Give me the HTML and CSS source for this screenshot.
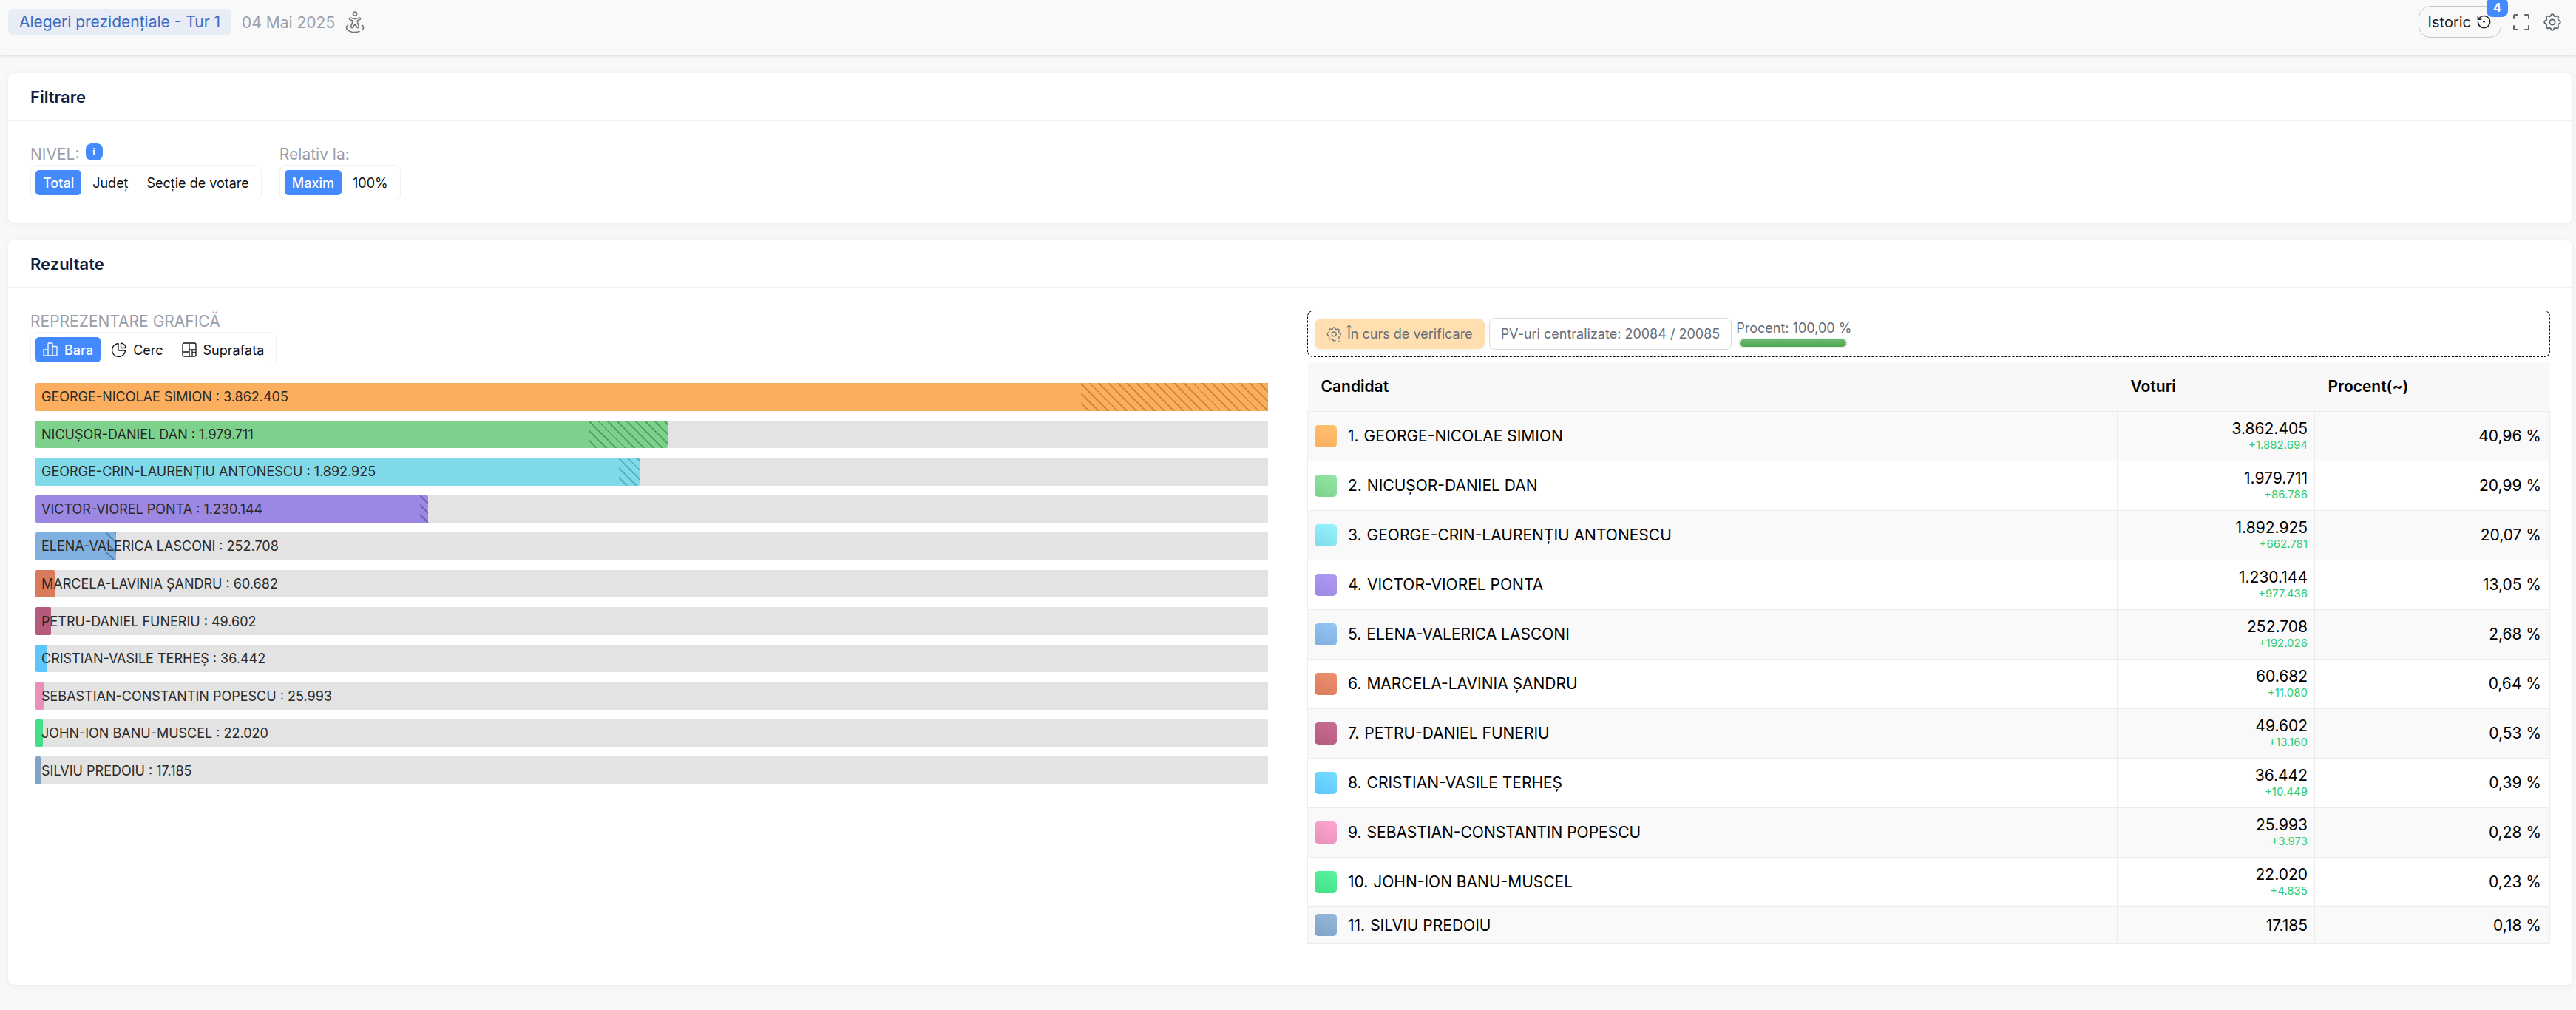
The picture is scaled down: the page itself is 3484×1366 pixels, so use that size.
FILE: index.html
```html
<!DOCTYPE html>
<html lang="ro">
<head>
  <meta charset="UTF-8">
  <title>Alegeri prezidențiale - Tur 1</title>
  <meta name="viewport" content="width=device-width, initial-scale=1.0">
  <link rel="stylesheet" href="styles.css">
</head>
<body>
  <header class="topbar">
    <div class="topbar-info">
      <a class="tag" href="#">Alegeri prezidențiale - Tur 1</a>
      <span class="date">04 Mai 2025</span>
      <svg class="person" viewBox="0 0 26 30" fill="none" stroke="currentColor" stroke-width="1.6" stroke-linejoin="round" stroke-linecap="round">
        <circle cx="13" cy="3.6" r="2.600"/>
        <path d="M5.800 9.500c-1 1.300.2 2.200 1.500 2.500l2.200.8v2.700l-1.800 5c-.6 2.200 1.800 2.800 2.600 1.200L13 17.500l2.700 4.200c.8 1.600 3.200 1 2.600-1.200l-1.800-5v-2.700l2.200-.8c1.300-.3 2.500-1.200 1.500-2.500-.7-1-2-.5-3 0-2.600 1.200-5.800 1.200-8.400 0-1-.5-2.300-1-3 0z"/>
        <path d="M3.500 19C-.5 22.500 2 27 9 28.200c3.500.5 7 .3 10-.7M22.500 19c2.500 1.500 3 4 .5 6.500"/>
      </svg>
    </div>
    <div class="topbar-actions">
      <button class="history" type="button">
        Istoric
        <svg viewBox="0 0 20 20" fill="none" stroke="currentColor" stroke-width="1.7" stroke-linecap="round" stroke-linejoin="round">
          <path d="M1.500 10.500a8.500 8.500 0 1 0 2.300-6.300L1.500 6.500M1.500 2v4.500H6"/>
          <circle cx="10" cy="10" r="1" fill="currentColor" stroke-width="1"/>
        </svg>
        <span class="count">4</span>
      </button>
      <button class="icon-btn" type="button" aria-label="Ecran complet">
        <svg viewBox="0 0 24 24" fill="none" stroke="currentColor" stroke-width="2" stroke-linecap="round" stroke-linejoin="round">
          <path d="M2 7V3.500A1.500 1.500 0 0 1 3.500 2H7M17 2h3.500A1.500 1.500 0 0 1 22 3.500V7M22 17v3.500a1.500 1.500 0 0 1-1.500 1.500H17M7 22H3.500A1.500 1.500 0 0 1 2 20.500V17"/>
        </svg>
      </button>
      <button class="icon-btn" type="button" aria-label="Setări">
        <svg viewBox="2 2 20 20" fill="none" stroke="currentColor" stroke-width="1.5" stroke-linecap="round" stroke-linejoin="round">
          <path d="M10.325 4.317c.426-1.756 2.924-1.756 3.350 0a1.724 1.724 0 0 0 2.573 1.066c1.543-.94 3.310.826 2.370 2.370a1.724 1.724 0 0 0 1.065 2.572c1.756.426 1.756 2.924 0 3.350a1.724 1.724 0 0 0-1.066 2.573c.94 1.543-.826 3.310-2.370 2.370a1.724 1.724 0 0 0-2.572 1.065c-.426 1.756-2.924 1.756-3.350 0a1.724 1.724 0 0 0-2.573-1.066c-1.543.94-3.310-.826-2.370-2.370a1.724 1.724 0 0 0-1.065-2.572c-1.756-.426-1.756-2.924 0-3.350a1.724 1.724 0 0 0 1.066-2.573c-.94-1.543.826-3.310 2.370-2.370 1 .608 2.296.07 2.572-1.065z"/>
          <circle cx="12" cy="12" r="3"/>
        </svg>
      </button>
    </div>
  </header>

  <main>
    <section class="card">
      <h2>Filtrare</h2>
      <div class="card-body filters">
        <div>
          <div class="label">NIVEL: <span class="info">i</span></div>
          <div class="group">
            <button class="active" type="button">Total</button>
            <button type="button">Județ</button>
            <button type="button">Secție de votare</button>
          </div>
        </div>
        <div>
          <div class="label">Relativ la:</div>
          <div class="group">
            <button class="active" type="button">Maxim</button>
            <button type="button">100%</button>
          </div>
        </div>
      </div>
    </section>

    <section class="card">
      <h2>Rezultate</h2>
      <div class="card-body results">
        <div class="chart">
          <div class="label">REPREZENTARE GRAFICĂ</div>
          <div class="group">
            <button class="active" type="button">
              <svg viewBox="0 0 20 20" fill="none" stroke="currentColor" stroke-width="1.300" stroke-linejoin="round"><path d="M1 10h6v8H2a1 1 0 0 1-1-1zM7 18V2a1 1 0 0 1 1-1h4a1 1 0 0 1 1 1v16zM13 5.500h5a1 1 0 0 1 1 1V17a1 1 0 0 1-1 1h-5z"/></svg>
              Bara
            </button>
            <button type="button">
              <svg viewBox="0 0 20 20" fill="none" stroke="currentColor" stroke-width="1.300" stroke-linejoin="round"><path d="M9 1.500V10a1 1 0 0 0 1 1h8.500A9 9 0 1 1 9 1.500zM12.500 1v6.500H19A7 7 0 0 0 12.500 1z"/></svg>
              Cerc
            </button>
            <button type="button">
              <svg viewBox="0 0 20 20" fill="none" stroke="currentColor" stroke-width="1.300"><rect x="1" y="1" width="18" height="18" rx="2"/><path d="M10 1v18M1 13h9M10 10h9M14 10v9M14 14h5M16.500 10v4"/></svg>
              Suprafata
            </button>
          </div>

          <div class="bars">
            <div class="bar"><i class="fill c1" style="width:100%"><b style="width:253px"></b></i><span>GEORGE-NICOLAE SIMION : 3.862.405</span></div>
            <div class="bar"><i class="fill c2" style="width:51.26%"><b style="width:107px"></b></i><span>NICUȘOR-DANIEL DAN : 1.979.711</span></div>
            <div class="bar"><i class="fill c3" style="width:49.01%"><b style="width:28px"></b></i><span>GEORGE-CRIN-LAURENȚIU ANTONESCU : 1.892.925</span></div>
            <div class="bar"><i class="fill c4" style="width:31.85%"><b style="width:11px"></b></i><span>VICTOR-VIOREL PONTA : 1.230.144</span></div>
            <div class="bar"><i class="fill c5" style="width:6.54%"><b style="width:13px"></b></i><span>ELENA-VALERICA LASCONI : 252.708</span></div>
            <div class="bar"><i class="fill c6" style="width:1.57%"></i><span>MARCELA-LAVINIA ȘANDRU : 60.682</span></div>
            <div class="bar"><i class="fill c7" style="width:1.28%"></i><span>PETRU-DANIEL FUNERIU : 49.602</span></div>
            <div class="bar"><i class="fill c8" style="width:0.94%"></i><span>CRISTIAN-VASILE TERHEȘ : 36.442</span></div>
            <div class="bar"><i class="fill c9" style="width:0.67%"></i><span>SEBASTIAN-CONSTANTIN POPESCU : 25.993</span></div>
            <div class="bar"><i class="fill c10" style="width:0.57%"></i><span>JOHN-ION BANU-MUSCEL : 22.020</span></div>
            <div class="bar"><i class="fill c11" style="width:0.44%"></i><span>SILVIU PREDOIU : 17.185</span></div>
          </div>
        </div>

        <div class="ranking">
          <div class="status">
            <span class="chip chip-warn">
              <svg viewBox="0 0 20 20" fill="none" stroke="currentColor" stroke-width="1.300" stroke-linecap="round" stroke-linejoin="round"><path d="M12 18.500c-1 1-3 .5-3.400-1a1.700 1.700 0 0 0-2.500-1c-1.600.9-3.400-.8-2.500-2.400a1.700 1.700 0 0 0-1-2.500c-1.800-.5-1.800-2.900 0-3.400a1.700 1.700 0 0 0 1-2.500c-.9-1.500.9-3.300 2.500-2.400a1.700 1.700 0 0 0 2.500-1c.4-1.800 2.900-1.800 3.300 0a1.700 1.700 0 0 0 2.500 1c1.600-.9 3.400.9 2.500 2.400a1.700 1.700 0 0 0 1 2.500c1.300.3 1.700 1.600 1.300 2.500"/><circle cx="10.200" cy="9.800" r="3"/><path d="M17 13v3.500M17 19.200v.1"/></svg>
              În curs de verificare
            </span>
            <span class="chip">PV-uri centralizate: 20084 / 20085</span>
            <div class="progress">
              <label for="procent">Procent: 100,00 %</label>
              <progress id="procent" value="100" max="100"></progress>
            </div>
          </div>

          <table>
            <thead>
              <tr><th>Candidat</th><th class="col-votes">Voturi</th><th class="col-percent">Procent(~)</th></tr>
            </thead>
            <tbody>
              <tr><td><div class="name"><i class="swatch c1"></i>1. <span>GEORGE-NICOLAE SIMION</span></div></td><td>3.862.405<small>+1.882.694</small></td><td>40,96 %</td></tr>
              <tr><td><div class="name"><i class="swatch c2"></i>2. <span>NICUȘOR-DANIEL DAN</span></div></td><td>1.979.711<small>+86.786</small></td><td>20,99 %</td></tr>
              <tr><td><div class="name"><i class="swatch c3"></i>3. <span>GEORGE-CRIN-LAURENȚIU ANTONESCU</span></div></td><td>1.892.925<small>+662.781</small></td><td>20,07 %</td></tr>
              <tr><td><div class="name"><i class="swatch c4"></i>4. <span>VICTOR-VIOREL PONTA</span></div></td><td>1.230.144<small>+977.436</small></td><td>13,05 %</td></tr>
              <tr><td><div class="name"><i class="swatch c5"></i>5. <span>ELENA-VALERICA LASCONI</span></div></td><td>252.708<small>+192.026</small></td><td>2,68 %</td></tr>
              <tr><td><div class="name"><i class="swatch c6"></i>6. <span>MARCELA-LAVINIA ȘANDRU</span></div></td><td>60.682<small>+11.080</small></td><td>0,64 %</td></tr>
              <tr><td><div class="name"><i class="swatch c7"></i>7. <span>PETRU-DANIEL FUNERIU</span></div></td><td>49.602<small>+13.160</small></td><td>0,53 %</td></tr>
              <tr><td><div class="name"><i class="swatch c8"></i>8. <span>CRISTIAN-VASILE TERHEȘ</span></div></td><td>36.442<small>+10.449</small></td><td>0,39 %</td></tr>
              <tr><td><div class="name"><i class="swatch c9"></i>9. <span>SEBASTIAN-CONSTANTIN POPESCU</span></div></td><td>25.993<small>+3.973</small></td><td>0,28 %</td></tr>
              <tr><td><div class="name"><i class="swatch c10"></i>10. <span>JOHN-ION BANU-MUSCEL</span></div></td><td>22.020<small>+4.835</small></td><td>0,23 %</td></tr>
              <tr><td><div class="name"><i class="swatch c11"></i>11. <span>SILVIU PREDOIU</span></div></td><td>17.185</td><td>0,18 %</td></tr>
            </tbody>
          </table>
        </div>
      </div>
    </section>
  </main>
</body>
</html>
```
FILE: styles.css
```css
* {
  box-sizing: border-box;
}
body {
  margin: 0;
  font-family: Inter, sans-serif;
  font-size: 21px;
  color: #000;
  background: #f8f8f8;
}
button {
  font-family: inherit;
  cursor: pointer;
}
.topbar {
  display: flex;
  justify-content: space-between;
  align-items: flex-start;
  height: 75px;
  padding: 8px 17px 0 11px;
  background: #f9f9f9;
  box-shadow: 0 1px 5px rgba(0,0,0,0.12);
}
.topbar-info {
  display: flex;
  align-items: center;
  gap: 14px;
  padding-top: 4px;
}
.tag {
  padding: 0 15px;
  line-height: 36px;
  border-radius: 8px;
  background: #e7ecf7;
  color: #3a6bbf;
  text-decoration: none;
}
.date {
  color: #9a9fac;
}
.person {
  width: 26px;
  height: 30px;
  color: #777;
}
.topbar-actions {
  display: flex;
  align-items: center;
  gap: 12px;
}
.history {
  position: relative;
  display: flex;
  align-items: center;
  gap: 8px;
  height: 43px;
  padding: 0 13px 0 12px;
  border: 1px solid #c8c8c8;
  border-radius: 16px;
  background: transparent;
  font-size: 20px;
  color: #222;
}
.history svg {
  width: 19px;
  height: 19px;
}
.count {
  position: absolute;
  top: -12px;
  right: -10px;
  width: 29px;
  line-height: 26px;
  border-radius: 8px;
  background: #448aff;
  color: #fff;
  font-size: 16px;
  font-weight: 700;
}
.icon-btn {
  display: flex;
  padding: 3px;
  border: 0;
  background: none;
  color: #5b6570;
}
.icon-btn svg {
  width: 24px;
  height: 24px;
}
main {
  display: flex;
  flex-direction: column;
  gap: 24px;
  padding: 24px 5px 35px 11px;
}
.card {
  background: #fff;
  border-radius: 8px;
  box-shadow: 0 1px 8px rgba(0,0,0,0.06);
}
h2 {
  margin: 0;
  padding: 1px 30px 0;
  line-height: 62px;
  border-bottom: 1px solid #f0f0f0;
  font-size: 22px;
  font-weight: 600;
  color: #12203a;
}
.card-body {
  padding: 31px 30px 30px;
}
.filters {
  display: flex;
  gap: 24px;
}
.label {
  display: flex;
  gap: 8px;
  line-height: 29px;
  color: #9a9fac;
}
.info {
  width: 23px;
  height: 23px;
  border-radius: 8px;
  background: #448aff;
  color: #fff;
  font: bold 15px/23px "Liberation Serif", serif;
  text-align: center;
}
.group {
  display: inline-flex;
  gap: 5px;
  padding: 6px;
  border: 1px solid #f1f1f1;
  border-radius: 8px;
}
.group button {
  display: flex;
  align-items: center;
  gap: 9px;
  height: 34px;
  padding: 0 10px;
  border: 0;
  border-radius: 5px;
  background: none;
  font-size: 18px;
  color: #111;
}
.group button.active {
  background: #448aff;
  color: #fff;
  font-weight: 500;
}
.group svg {
  width: 20px;
  height: 20px;
}
.results {
  display: grid;
  grid-template-columns: 1fr 1fr;
  gap: 46px;
  padding-bottom: 55px;
}
.bars {
  display: grid;
  grid-auto-rows: 1fr;
  gap: 13px;
  height: 543px;
  margin: 21px 7px 0;
}
.bar {
  position: relative;
  display: flex;
  align-items: center;
  padding-left: 8px;
  background: #e3e3e3;
  border-radius: 2px;
  font-size: 18px;
  color: #2a2a2a;
}
.bar span {
  position: relative;
}
.fill {
  position: absolute;
  top: 0;
  left: 0;
  bottom: 0;
  display: flex;
  justify-content: flex-end;
  border-radius: 2px;
  background: var(--bar);
}
.fill b {
  background: repeating-linear-gradient(45deg, transparent 0 7px, var(--line) 7px 9px);
}
.c1 { --bar: #fbae5e; --line: #d4893b; --light: #ffc272; }
.c2 { --bar: #7dd18d; --line: #55a665; --light: #94e6a4; }
.c3 { --bar: #80d9e9; --line: #58b1c1; --light: #98f4ff; }
.c4 { --bar: #9c88e3; --line: #7460bb; --light: #b09cf7; }
.c5 { --bar: #7fb0df; --line: #5788b7; --light: #95c6f7; }
.c6 { --bar: #d97a5b; --line: #b15233; --light: #ed8f70; }
.c7 { --bar: #b45a7d; --line: #8c3255; --light: #c96e92; }
.c8 { --bar: #5ec5ff; --line: #369dd7; --light: #74deff; }
.c9 { --bar: #e890ba; --line: #c06892; --light: #fda6d0; }
.c10 { --bar: #42de88; --line: #1ab660; --light: #58f59e; }
.c11 { --bar: #80a2c6; --line: #587a9e; --light: #96b9dc; }
.status {
  display: flex;
  align-items: center;
  gap: 6px;
  height: 63px;
  margin-bottom: 7px;
  padding: 0 9px;
  border: 1px dashed #000;
  border-radius: 8px;
  font-size: 18px;
  color: #666d78;
}
.chip {
  display: flex;
  align-items: center;
  gap: 8px;
  height: 43px;
  padding: 0 15px;
  border: 1px solid #d9d9d9;
  border-radius: 8px;
}
.chip-warn {
  height: 41px;
  border-color: #ffdfb0;
  background: #ffdfb0;
  box-shadow: 0 3px 8px rgba(0,0,0,0.05);
}
.chip svg {
  width: 20px;
  height: 20px;
}
.progress {
  display: flex;
  flex-direction: column;
  gap: 3px;
}
progress {
  appearance: none;
  width: 148px;
  height: 14px;
  margin-left: 3px;
}
progress::-webkit-progress-bar {
  padding: 2px;
  border-radius: 6px;
  background: #efefef;
}
progress::-webkit-progress-value {
  border-radius: 5px;
  background: linear-gradient(#6cb86f, #4ca750);
}
table {
  width: 100%;
  table-layout: fixed;
  border-collapse: collapse;
}
th {
  height: 66px;
  padding: 0 18px 1px;
  background: #f8f8f8;
  text-align: left;
  font-size: 21px;
  font-weight: 600;
}
.col-votes {
  width: 267px;
}
.col-percent {
  width: 318px;
}
td {
  height: 67px;
  padding: 0 9px;
  border: 1px solid #ececec;
  text-align: right;
  line-height: 25px;
}
td:last-child {
  padding-right: 11px;
}
tbody tr:nth-child(odd) {
  background: #f9f9f9;
}
tbody tr:last-child td {
  height: 50px;
}
small {
  display: block;
  font-size: 15px;
  line-height: 20px;
  color: #2ecc71;
}
.name {
  display: flex;
  align-items: center;
}
.name span {
  margin-left: 7px;
}
.swatch {
  width: 30px;
  height: 30px;
  margin-right: 15px;
  border-radius: 5px;
  background: linear-gradient(25deg, var(--bar), var(--light));
}
```
